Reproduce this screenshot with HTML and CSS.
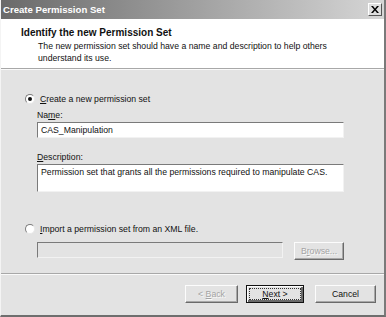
FILE: index.html
```html
<!DOCTYPE html>
<html lang="en">
<head>
    <meta charset="UTF-8">
    <title>Create Permission Set</title>
    <link rel="stylesheet" href="styles.css">
</head>
<body>
    <div class="dialog">
        <div class="titlebar">
            <span class="title">Create Permission Set</span>
            <span class="close-btn">
                <svg width="8" height="7" viewBox="0 0 8 7"><path d="M0 0h2l2 2.5L6 0h2L5 3.5 8 7H6L4 4.5 2 7H0l3-3.5z" fill="#000"/></svg>
            </span>
        </div>

        <div class="header">
            <h2 class="header-title">Identify the new Permission Set</h2>
            <p class="header-desc">The new permission set should have a name and description to help others understand its use.</p>
        </div>

        <div class="content">
            <div class="radio-row first">
                <span class="radio checked"></span>
                <span><u>C</u>reate a new permission set</span>
            </div>
            <div class="field">
                <div class="field-label">Na<u>m</u>e:</div>
                <div class="textbox">CAS_Manipulation</div>
            </div>
            <div class="field">
                <div class="field-label"><u>D</u>escription:</div>
                <div class="textbox tall">Permission set that grants all the permissions required to manipulate CAS.</div>
            </div>

            <div class="radio-row second">
                <span class="radio"></span>
                <span><u>I</u>mport a permission set from an XML file.</span>
            </div>
            <div class="file-row">
                <div class="textbox disabled"></div>
                <button class="btn browse" disabled>B<u>r</u>owse...</button>
            </div>
        </div>

        <div class="footer">
            <button class="btn" disabled>&lt; <u>B</u>ack</button>
            <button class="btn default"><span class="focus"><u>N</u>ext &gt;</span></button>
            <button class="btn cancel">Cancel</button>
        </div>
    </div>
</body>
</html>
```

FILE: styles.css
```css
body {
    margin: 0;
    font-family: "Liberation Sans", Arial, sans-serif;
    font-size: 8.7px;
    color: #111;
}

.dialog {
    width: 386px;
    height: 317px;
    box-sizing: border-box;
    background: #e3e3e3;
    border-left: 1px solid #f4f4f4;
    border-right: 2px solid #7a7a7a;
    border-bottom: 2px solid #6e6e6e;
    display: flex;
    flex-direction: column;
}

.titlebar {
    height: 19px;
    display: flex;
    align-items: center;
    justify-content: space-between;
    padding: 0 2px 0 2px;
    background: linear-gradient(to right, #6a6a6a, #9a9a9a 45%, #d6d6d6);
}

.title {
    color: #fff;
    font-weight: bold;
    font-size: 9.6px;
}

.close-btn {
    width: 14px;
    height: 13px;
    box-sizing: border-box;
    display: flex;
    align-items: center;
    justify-content: center;
    background: #dedede;
    border: 1px solid;
    border-color: #fff #555 #555 #fff;
}

.header {
    height: 50px;
    background: #fff;
    padding: 8px 0 0 20px;
    box-sizing: border-box;
    border-bottom: 1px solid #a8a8a8;
    box-shadow: 0 1px 0 #fafafa;
}

.header-title {
    margin: 0;
    font-size: 10px;
    font-weight: bold;
    line-height: 11px;
}

.header-desc {
    margin: 2px 0 0 17px;
    width: 300px;
    line-height: 12px;
}

.content {
    padding: 24px 0 0 24px;
    height: 205px;
    box-sizing: border-box;
    border-bottom: 1px solid #a8a8a8;
    box-shadow: 0 1px 0 #fafafa;
}

.radio-row {
    display: flex;
    align-items: center;
    gap: 5px;
    height: 12px;
}

.radio-row.second {
    margin-top: 31px;
}

.radio {
    width: 10px;
    height: 10px;
    box-sizing: border-box;
    border-radius: 50%;
    background: #fff;
    border: 1px solid;
    border-color: #7c7c7c #e8e8e8 #e8e8e8 #7c7c7c;
    display: flex;
    align-items: center;
    justify-content: center;
}

.radio.checked::after {
    content: "";
    width: 4px;
    height: 4px;
    border-radius: 50%;
    background: #111;
}

.field {
    margin-left: 12px;
    margin-top: 4px;
}

.field + .field {
    margin-top: 13px;
}

.field-label {
    line-height: 12px;
    margin-bottom: 1px;
}

.textbox {
    width: 307px;
    height: 16px;
    box-sizing: border-box;
    background: #fff;
    border: 1px solid;
    border-color: #7a7a7a #f2f2f2 #f2f2f2 #7a7a7a;
    padding: 2px 3px;
    line-height: 11px;
}

.textbox.tall {
    height: 28px;
}

.textbox.disabled {
    width: 246px;
    background: #e3e3e3;
}

.file-row {
    margin: 7px 0 0 12px;
    display: flex;
    gap: 11px;
}

.btn {
    font-family: inherit;
    font-size: 8.7px;
    color: #111;
    height: 18px;
    padding: 0;
    background: #e3e3e3;
    border: 1px solid;
    border-color: #fcfcfc #6a6a6a #6a6a6a #fcfcfc;
    box-shadow: inset -1px -1px 0 #a8a8a8;
}

.btn:disabled {
    color: #a4a4a4;
    text-shadow: 1px 1px 0 #fafafa;
}

.browse {
    width: 50px;
}

.footer {
    display: flex;
    justify-content: flex-end;
    gap: 8px;
    padding: 11px 8px 0 0;
}

.footer .btn {
    width: 53px;
}

.footer .btn.cancel {
    width: 61px;
    margin-left: 3px;
}

.footer .btn.default {
    width: 58px;
    border: 1px solid #111;
    box-shadow: inset 1px 1px 0 #fcfcfc, inset -2px -2px 0 #6a6a6a;
    padding: 2px;
}

.focus {
    display: block;
    height: 100%;
    box-sizing: border-box;
    border: 1px dotted #333;
    line-height: 10px;
}
```
